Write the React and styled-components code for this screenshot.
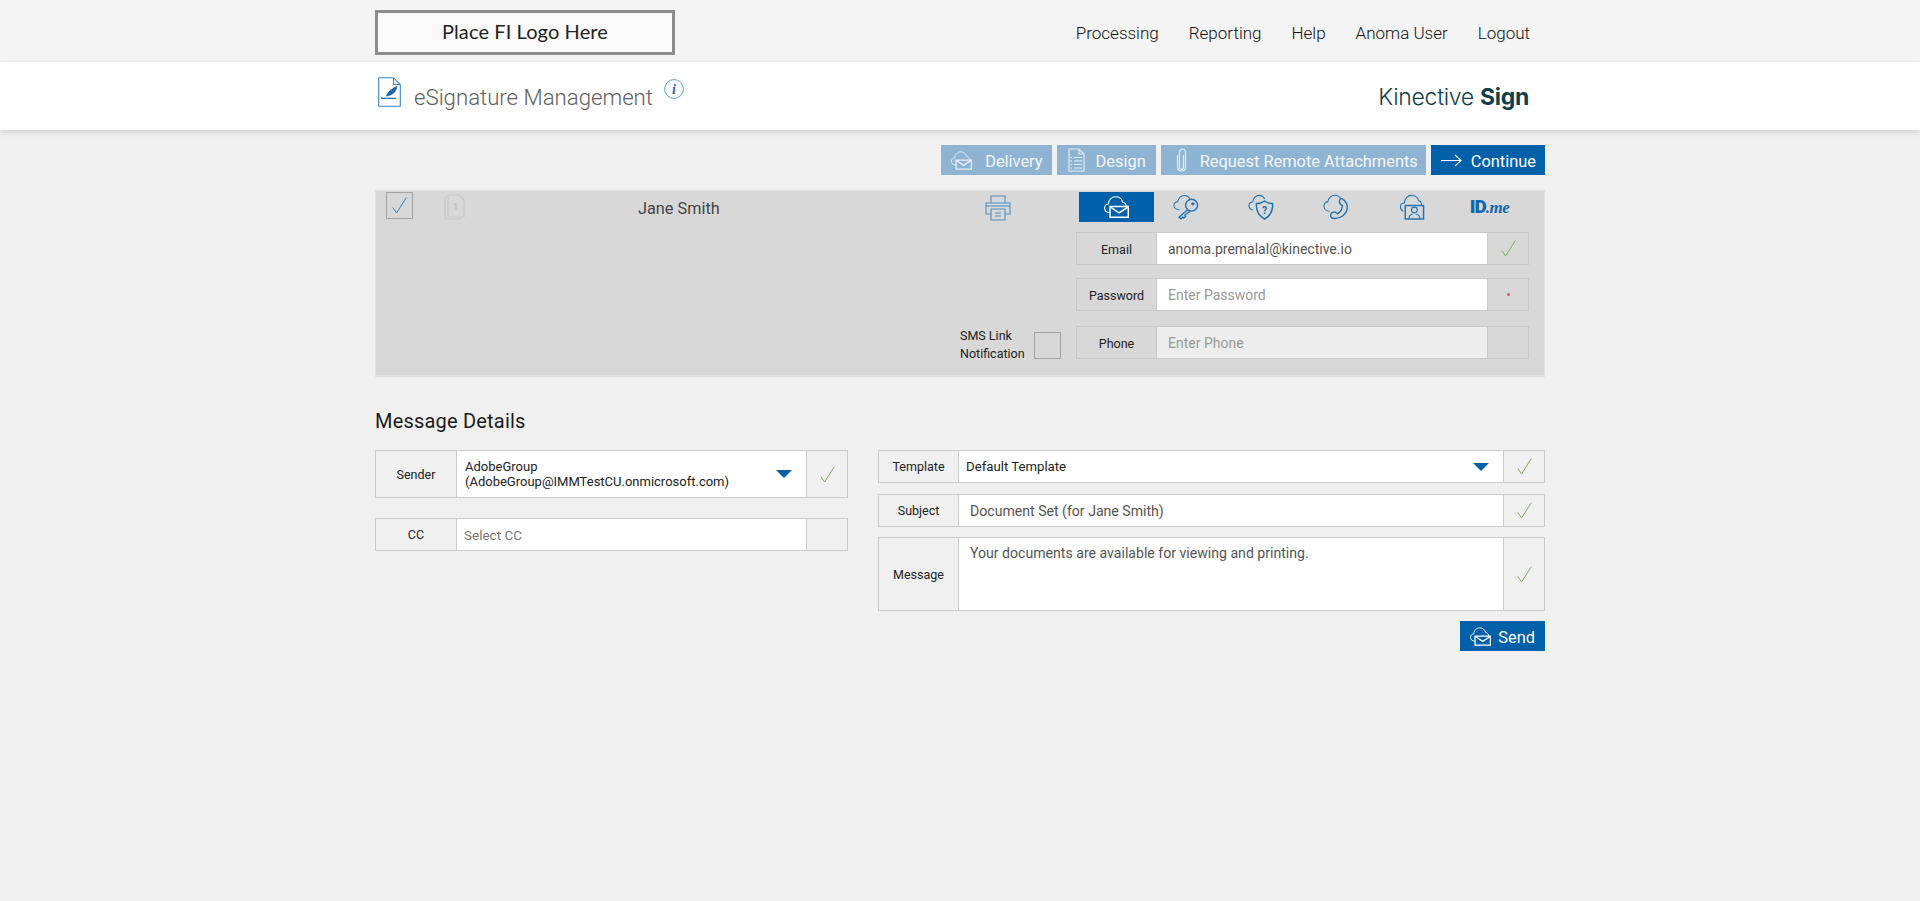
import React from 'react';
import styled, { createGlobalStyle } from 'styled-components';

const blue = '#0060a9';
const iconBlue = '#2273b6';

const GlobalStyle = createGlobalStyle`
  html, body {
    margin: 0;
    min-height: 100%;
    background: #f0f0f0;
    font-family: Roboto, "Liberation Sans", sans-serif;
  }
  * { box-sizing: border-box; }
`;

const Page = styled.div`
  min-height: 901px;
  background: #f0f0f0;
`;

const Wrap = styled.div`
  width: 1170px;
  margin: 0 auto;
`;

const TopBar = styled.div`
  height: 62px;
  background: #f4f4f4;
`;

const TopInner = styled(Wrap)`
  display: flex;
  justify-content: space-between;
  padding: 10px 15px 0 0;
`;

const LogoBox = styled.div`
  width: 300px;
  height: 45px;
  border: 3px solid #8c8c8c;
  background: #fafafa;
  display: flex;
  align-items: center;
  justify-content: center;
  font-family: Lato, sans-serif;
  font-size: 20px;
  font-weight: 400;
  letter-spacing: 0.1px;
  color: #222;
  padding-bottom: 3px;
`;

const Nav = styled.nav`
  display: flex;
  gap: 30px;
  padding-top: 13px;
  font-size: 17px;
  font-weight: 300;
  color: #111;
  line-height: 20px;
`;

const TitleBar = styled.div`
  height: 68px;
  background: #fff;
  box-shadow: 0 2px 6px rgba(0, 0, 0, 0.14);
`;

const TitleInner = styled(Wrap)`
  display: flex;
  align-items: flex-start;
  justify-content: space-between;
  padding: 15px 16px 0 3px;
`;

const TitleGroup = styled.div`
  display: flex;
  align-items: flex-start;
`;

const Title = styled.h1`
  margin: 5px 11px 0 13px;
  font-size: 22.2px;
  line-height: 30px;
  font-weight: 300;
  color: #5e5e5e;
`;

const InfoMark = styled.svg`
  margin-top: 2px;
`;

const Brand = styled.div`
  margin-top: 5px;
  font-family: Inter, sans-serif;
  font-size: 23px;
  line-height: 30px;
  font-weight: 300;
  color: #0f3f4a;
  letter-spacing: -0.3px;
  b { font-weight: 700; }
`;

const Actions = styled.div`
  display: flex;
  justify-content: flex-end;
  gap: 5px;
  margin-top: 15px;
`;

const ActionButton = styled.button`
  height: 30px;
  display: flex;
  align-items: center;
  gap: ${(p) => p.$gap || 13}px;
  padding: 0 ${(p) => p.$right || 10}px 0 ${(p) => p.$left || 10}px;
  border: 0;
  background: ${(p) => (p.$dim ? '#8fb4d3' : blue)};
  color: ${(p) => (p.$dim ? '#f2f6fa' : '#fff')};
  font-family: inherit;
  font-size: 16.4px;
  white-space: nowrap;
`;

const ActionLabel = styled.span`
  padding-top: 3px;
`;

const RecipientPanel = styled.section`
  height: 187px;
  margin-top: 15px;
  background: #d8d8d8;
  border: 1px solid #e0e0e0;
  border-bottom-width: 2px;
  display: flex;
`;

const RecipientLeft = styled.div`
  flex: 1;
  display: flex;
  flex-direction: column;
  justify-content: space-between;
  padding: 1px 15px 12px 10px;
`;

const RecipientHead = styled.div`
  display: flex;
  align-items: flex-start;
`;

const CheckBox = styled.div`
  width: 27px;
  height: 27px;
  border: 1px solid #a3a3a3;
  display: flex;
  align-items: center;
  justify-content: center;
`;

const DocMark = styled.svg`
  margin: 2px 0 0 31px;
`;

const RecipientName = styled.div`
  width: 82px;
  margin: 7px 0 0 173px;
  font-size: 16.3px;
  line-height: 20px;
  color: #444;
  white-space: nowrap;
`;

const PrinterMark = styled.svg`
  margin: 3px 0 0 265px;
`;

const SmsOption = styled.div`
  display: flex;
  justify-content: flex-end;
  align-items: center;
  gap: 10px;
`;

const SmsText = styled.div`
  width: 64px;
  font-size: 12.5px;
  line-height: 18px;
  color: #222;
`;

const RecipientRight = styled.div`
  width: 468px;
  padding: 1px 15px 0 0;
`;

const ChannelTabs = styled.div`
  display: flex;
  padding-left: 3px;
  margin-bottom: 10px;
`;

const ChannelTab = styled.div`
  width: 75.4px;
  height: 30px;
  display: flex;
  align-items: center;
  justify-content: center;
  padding-right: ${(p) => p.$shift || 0}px;
  background: ${(p) => (p.$active ? blue : 'transparent')};
`;

const IdMe = styled.span`
  font-size: 19px;
  line-height: 20px;
  font-weight: 900;
  color: #1466ab;
  letter-spacing: -1px;
  em {
    font-family: "Liberation Serif", serif;
    font-size: 17px;
    font-weight: 700;
    letter-spacing: -0.5px;
  }
`;

const FieldStack = styled.div`
  display: flex;
  flex-direction: column;
  gap: ${(p) => p.$gap}px;
`;

const Field = styled.div`
  display: flex;
  height: ${(p) => p.$h || 33}px;
  margin-top: ${(p) => p.$top || 0}px;
  border: 1px solid ${(p) => (p.$panel ? '#c9c9c9' : '#cbcbcb')};
`;

const FieldLabel = styled.div`
  width: ${(p) => p.$w || 79}px;
  flex: none;
  display: flex;
  align-items: center;
  justify-content: center;
  padding-top: ${(p) => (p.$nudge ? 1 : 0)}px;
  font-size: 12.5px;
  color: #222;
`;

const FieldValue = styled.div`
  flex: 1;
  display: flex;
  align-items: ${(p) => (p.$top ? 'flex-start' : 'center')};
  justify-content: space-between;
  background: ${(p) => p.$bg || '#fff'};
  border-left: 1px solid #cbcbcb;
  border-right: 1px solid #cbcbcb;
  padding: ${(p) => (p.$top ? '7px' : '0')} 11px 0 ${(p) => p.$pad || 10}px;
  font-size: ${(p) => p.$size || 14.1}px;
  line-height: ${(p) => p.$line || 16}px;
  color: ${(p) => p.$color || '#555'};
`;

const FieldStatus = styled.div`
  width: 40px;
  flex: none;
  display: flex;
  align-items: center;
  justify-content: center;
`;

const RedDot = styled.span`
  width: 3px;
  height: 3px;
  border-radius: 50%;
  background: #e2555f;
`;

const Caret = styled.span`
  width: 0;
  height: 0;
  margin-right: ${(p) => p.$right || 0}px;
  border-left: 8px solid transparent;
  border-right: 8px solid transparent;
  border-top: 8px solid ${blue};
`;

const SectionTitle = styled.h2`
  margin: 32px 0 0;
  font-size: 20px;
  line-height: 24px;
  font-weight: 400;
  letter-spacing: 0.2px;
  color: #1a1a1a;
`;

const DetailsGrid = styled.div`
  display: grid;
  grid-template-columns: 473px 667px;
  justify-content: space-between;
  align-items: start;
  margin-top: 17px;
  gap: 30px;
`;

const SendRow = styled.div`
  display: flex;
  justify-content: flex-end;
  margin-top: 10px;
`;

const Check = ({ color = '#86aa62', w = 15, h = 17 }) => (
  <svg width={w} height={h} viewBox="0 0 15 17" fill="none">
    <path d="M0.8 10.5 L4.6 16 L14.3 0.6" stroke={color} strokeWidth="1" />
  </svg>
);

const CloudMail = ({ color = '#fff', width = 25, height = 22 }) => (
  <svg width={width} height={height} viewBox="0 0 25 22" fill="none" stroke={color} strokeWidth="1.1">
    <path d="M6 16.5 C2.5 16.5 0.6 14.4 0.6 12 C0.6 9.6 2.4 8 4.4 8 C4.8 3.6 7.8 0.7 11.6 0.7 C15.2 0.7 18 3 18.6 6.2 C20.6 6.4 22 8 22.2 10.4" />
    <path d="M6 10.6 H24.3 V21.3 H6 Z" strokeWidth="1.5" />
    <path d="M6.4 11 L15.1 16.8 L24 11" strokeWidth="1.5" />
  </svg>
);

const CloudKey = () => (
  <svg width="26" height="26" viewBox="0 0 28 28" fill="none" stroke={iconBlue} strokeWidth="1.1">
    <path d="M7 17 C3 17 1 14.8 1 12.2 C1 9.8 3 8.2 5 8.4 C5.6 4.6 8.6 1.6 12 1.6 C15 1.6 17.4 3.2 18.4 6" />
    <circle cx="20" cy="12" r="6.4" strokeWidth="1.5" />
    <circle cx="21.4" cy="10.6" r="1.3" fill={iconBlue} />
    <path d="M16 16.6 L6.5 25 L8.6 26.8 L10.6 25 L11.6 26 L13.4 24.4 L12.6 23 L19 18" strokeWidth="1.5" />
  </svg>
);

const CloudShield = () => (
  <svg width="26" height="26" viewBox="0 0 26 26" fill="none" stroke={iconBlue} strokeWidth="1.1">
    <path d="M5 16 C2 15.6 1 13.6 1 11.6 C1 9.6 2.6 8 4.6 8 C5 4.4 7.6 1.4 11 1.4 C13.6 1.4 15.6 2.8 16.6 5" />
    <path d="M16.5 7 C19 9 21.5 9.6 24.6 9.6 C25 16 22 22 16.5 25 C11 22 8 16 8.4 9.6 C11.5 9.6 14 9 16.5 7 Z" strokeWidth="1.5" />
    <text x="16.5" y="19.5" textAnchor="middle" fontSize="10.5" fontWeight="700" fontFamily="Roboto" fill={iconBlue} stroke="none">?</text>
  </svg>
);

const CloudPhone = () => (
  <svg width="26" height="26" viewBox="0 0 27 27" fill="none" stroke={iconBlue} strokeWidth="1.1">
    <path d="M7 18 C3 18 1 15.4 1 12.4 C1 9.6 3 8 5 8.2 C5.6 4.2 8.6 1.2 12 1.2 C14.6 1.2 17 2.4 18.4 4.6" />
    <path d="M20 5 C24 7 26 12 25 16 C24 21 19 25.5 12 25.5 C9 25.5 7.5 24 8 21.5 C8.5 19.5 11 18 13 19 L15 20.5 C18 19 20 15 20.2 12 L18 10.5 C16.5 9 17 6 18 5.2 C18.6 4.6 19.4 4.6 20 5 Z" strokeWidth="1.5" />
  </svg>
);

const CloudScreen = () => (
  <svg width="26" height="26" viewBox="0 0 26 27" fill="none" stroke={iconBlue} strokeWidth="1.1">
    <path d="M4 18 C2 17 1 15.4 1 13.4 C1 11 2.8 9.4 5 9.4 C5.2 5 8.4 1.4 12.4 1.4 C16.4 1.4 19.4 4 20 7 C22 7.4 23 9 23 11.4" />
    <path d="M6 12 H25 V26 H6 Z" strokeWidth="1.5" />
    <circle cx="15.5" cy="16.6" r="3" />
    <path d="M9.6 25.6 C10 22.4 12 21.2 13.6 20.8 M21.4 25.6 C21 22.4 19 21.2 17.4 20.8" />
  </svg>
);

const PrinterIcon = () => (
  <PrinterMark width="26" height="26" viewBox="0 0 26 26" fill="none" stroke="#4e8fc4" strokeWidth="1.1">
    <path d="M6 8 V1 H20 V8" />
    <path d="M6 19 H1 V8 H25 V19 H20" />
    <path d="M1 11 H25" />
    <path d="M6 14 H20 V25 H6 Z" />
    <path d="M10 18 H16 M10 21 H16" />
  </PrinterMark>
);

const SignDocIcon = () => (
  <svg width="23" height="30" viewBox="0 0 23 30" fill="none">
    <path d="M0.7 0.7 H15.5 L22.3 7.5 V29.3 H0.7 Z M15.5 0.7 V7.5 H22.3" stroke="#3f86c3" strokeWidth="1.1" />
    <path d="M8 19.5 C9 15 14 11 19.5 9 C18.5 14 15 19 8 19.5 Z" fill="#1b67ad" />
    <path d="M5 21.3 H18" stroke="#1b67ad" strokeWidth="1.2" />
    <path d="M2.8 20 L5 22 M5 20 L2.8 22" stroke="#1b67ad" strokeWidth="0.7" />
  </svg>
);

const InfoIcon = () => (
  <InfoMark width="20" height="20" viewBox="0 0 20 20" fill="none">
    <circle cx="10" cy="10" r="9.4" stroke="#4a97cf" strokeWidth="0.9" />
    <text x="10" y="15" textAnchor="middle" fontFamily="Liberation Serif" fontStyle="italic" fontWeight="700" fontSize="14" fill="#1b67ad">i</text>
  </InfoMark>
);

const DocStackIcon = () => (
  <DocMark width="21" height="26" viewBox="0 0 21 26" fill="none" stroke="#c9c9c9" strokeWidth="1.2">
    <path d="M3 3 H1 V25 H17 V23" />
    <path d="M4 1 H15 L20 6 V23 H4 Z" />
    <text x="11.5" y="16" textAnchor="middle" fontSize="9" fontWeight="700" fontFamily="Roboto" fill="#c4c4c4" stroke="none">1</text>
  </DocMark>
);

const DesignIcon = () => (
  <svg width="17" height="24" viewBox="0 0 17 24" fill="none" stroke="#e6eef5" strokeWidth="1.1">
    <path d="M1 1 H11 L16 6 V23 H1 Z M11 1 V6 H16" />
    <path d="M6 9.5 H14 M6 13 H14 M6 16.5 H14 M6 20 H14" />
    <path d="M2.5 9.5 H4 M2.5 13 H4 M2.5 16.5 H4 M2.5 20 H4" />
  </svg>
);

const ClipIcon = () => (
  <svg width="11" height="24" viewBox="0 0 11 24" fill="none" stroke="#e6eef5" strokeWidth="1.2">
    <path d="M7.5 7 V19 C7.5 20.6 6.6 21.4 5.5 21.4 C4.4 21.4 3.5 20.6 3.5 19 V5 C3.5 2.6 4.6 1 6.4 1 C8.4 1 9.5 2.6 9.5 5 V19 C9.5 21.6 7.8 23 5.5 23 C3.2 23 1.5 21.6 1.5 19 V7" />
  </svg>
);

const ArrowIcon = () => (
  <svg width="21" height="13" viewBox="0 0 21 13" fill="none" stroke="#fff" strokeWidth="1.1">
    <path d="M0 6.5 H20 M14 1 L20 6.5 L14 12" />
  </svg>
);

const App = () => (
  <Page>
    <GlobalStyle />
    <TopBar>
      <TopInner>
        <LogoBox>Place FI Logo Here</LogoBox>
        <Nav>
          <span>Processing</span>
          <span>Reporting</span>
          <span>Help</span>
          <span>Anoma User</span>
          <span>Logout</span>
        </Nav>
      </TopInner>
    </TopBar>

    <TitleBar>
      <TitleInner>
        <TitleGroup>
          <SignDocIcon />
          <Title>eSignature Management</Title>
          <InfoIcon />
        </TitleGroup>
        <Brand>Kinective <b>Sign</b></Brand>
      </TitleInner>
    </TitleBar>

    <Wrap>
      <Actions>
        <ActionButton $dim $gap={13} $right={9}>
          <CloudMail color="#e6eef5" width={21} height={19} />
          <ActionLabel>Delivery</ActionLabel>
        </ActionButton>
        <ActionButton $dim $left={11} $gap={11}>
          <DesignIcon />
          <ActionLabel>Design</ActionLabel>
        </ActionButton>
        <ActionButton $dim $left={15} $gap={13} $right={8}>
          <ClipIcon />
          <ActionLabel>Request Remote Attachments</ActionLabel>
        </ActionButton>
        <ActionButton $gap={9} $right={9}>
          <ArrowIcon />
          <ActionLabel>Continue</ActionLabel>
        </ActionButton>
      </Actions>

      <RecipientPanel>
        <RecipientLeft>
          <RecipientHead>
            <CheckBox><Check color="#2f7dbb" /></CheckBox>
            <DocStackIcon />
            <RecipientName>Jane Smith</RecipientName>
            <PrinterIcon />
          </RecipientHead>
          <SmsOption>
            <SmsText>SMS Link Notification</SmsText>
            <CheckBox />
          </SmsOption>
        </RecipientLeft>

        <RecipientRight>
          <ChannelTabs>
            <ChannelTab $active><CloudMail /></ChannelTab>
            <ChannelTab $shift={10}><CloudKey /></ChannelTab>
            <ChannelTab $shift={10}><CloudShield /></ChannelTab>
            <ChannelTab $shift={10}><CloudPhone /></ChannelTab>
            <ChannelTab $shift={10}><CloudScreen /></ChannelTab>
            <ChannelTab $shift={4}><IdMe>ID<em>.me</em></IdMe></ChannelTab>
          </ChannelTabs>
          <Field $panel>
            <FieldLabel $nudge>Email</FieldLabel>
            <FieldValue $size={14} $pad={11}>anoma.premalal@kinective.io</FieldValue>
            <FieldStatus><Check /></FieldStatus>
          </Field>
          <Field $panel $top={13}>
            <FieldLabel $nudge>Password</FieldLabel>
            <FieldValue $size={14} $pad={11} $color="#999">Enter Password</FieldValue>
            <FieldStatus><RedDot /></FieldStatus>
          </Field>
          <Field $panel $top={15}>
            <FieldLabel $nudge>Phone</FieldLabel>
            <FieldValue $size={14} $pad={11} $color="#999" $bg="#ededed">Enter Phone</FieldValue>
            <FieldStatus />
          </Field>
        </RecipientRight>
      </RecipientPanel>

      <SectionTitle>Message Details</SectionTitle>

      <DetailsGrid>
        <FieldStack $gap={20}>
          <Field $h={48}>
            <FieldLabel $w={80}>Sender</FieldLabel>
            <FieldValue $size={13} $line={15} $color="#222" $pad={8}>
              <span>AdobeGroup<br />(AdobeGroup@IMMTestCU.onmicrosoft.com)</span>
              <Caret $right={3} />
            </FieldValue>
            <FieldStatus><Check /></FieldStatus>
          </Field>
          <Field>
            <FieldLabel $w={80}>CC</FieldLabel>
            <FieldValue $size={13.5} $color="#777" $pad={7}>Select CC</FieldValue>
            <FieldStatus />
          </Field>
        </FieldStack>

        <div>
          <FieldStack $gap={10}>
            <Field>
              <FieldLabel>Template</FieldLabel>
              <FieldValue $size={13.2} $color="#222" $pad={7}>
                Default Template
                <Caret $right={3} />
              </FieldValue>
              <FieldStatus><Check /></FieldStatus>
            </Field>
            <Field $top={1}>
              <FieldLabel>Subject</FieldLabel>
              <FieldValue $pad={11}>Document Set (for Jane Smith)</FieldValue>
              <FieldStatus><Check /></FieldStatus>
            </Field>
            <Field $h={74}>
              <FieldLabel>Message</FieldLabel>
              <FieldValue $top $pad={11}>Your documents are available for viewing and printing.</FieldValue>
              <FieldStatus><Check /></FieldStatus>
            </Field>
          </FieldStack>
          <SendRow>
            <ActionButton $gap={7}>
              <CloudMail width={21} height={19} />
              <ActionLabel>Send</ActionLabel>
            </ActionButton>
          </SendRow>
        </div>
      </DetailsGrid>
    </Wrap>
  </Page>
);

export default App;
